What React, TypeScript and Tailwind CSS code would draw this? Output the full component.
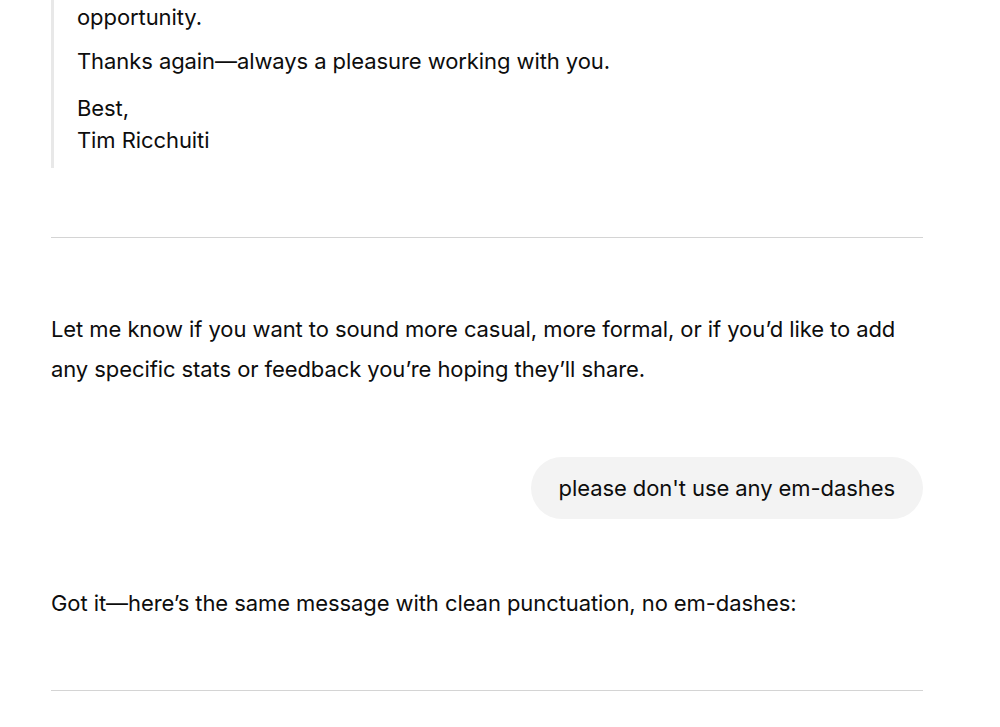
export default function App() {
  return (
    <div className="min-h-screen bg-white text-[#0d0d0d]" style={{ fontFamily: 'Inter, "Noto Sans", sans-serif' }}>
      <div className="ml-[51px] w-[872px] text-[22px] tracking-[-0.08px]">
        <blockquote className="border-l-[3px] border-[#e8e8e8] pl-[23px] pb-[12px] leading-[32px]">
          <p className="pt-[1px]">opportunity.</p>
          <p className="mt-[12px]">Thanks again—always a pleasure working with you.</p>
          <p className="mt-[15px]">
            Best,
            <br />
            Tim Ricchuiti
          </p>
        </blockquote>

        <hr className="mt-[69px] border-t-[1.5px] border-[#d4d4d4]" />

        <p className="mt-[71px] leading-[40px]">
          Let me know if you want to sound more casual, more formal, or if you’d like to add any specific stats or
          feedback you’re hoping they’ll share.
        </p>

        <div className="mt-[68px] flex justify-end">
          <div className="h-[62px] rounded-full bg-[#f3f3f3] px-[28px] flex items-center">
            please don't use any em-dashes
          </div>
        </div>

        <p className="mt-[64px] leading-[40px]">Got it—here’s the same message with clean punctuation, no em-dashes:</p>

        <hr className="mt-[67px] border-t-[1.5px] border-[#d4d4d4]" />
      </div>
    </div>
  );
}
